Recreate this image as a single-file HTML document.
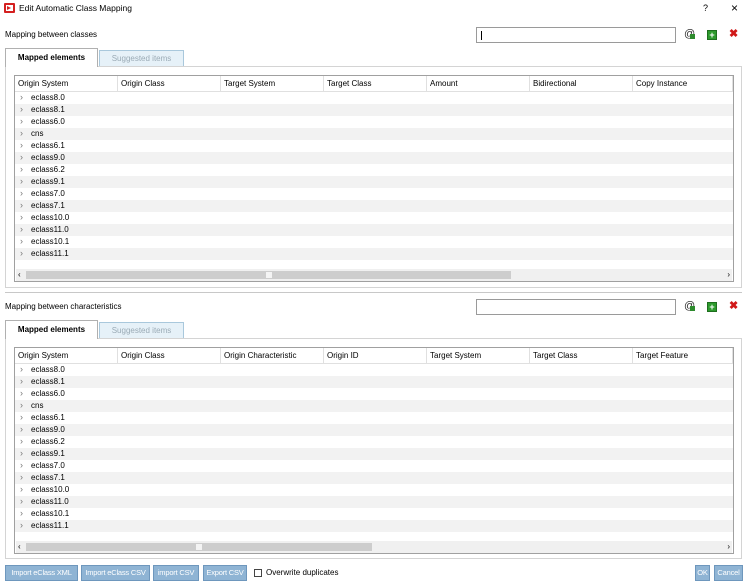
<!DOCTYPE html>
<html><head><style>
*{box-sizing:border-box;margin:0;padding:0}
body{width:750px;height:585px;background:#fff;font-family:"Liberation Sans",sans-serif;font-size:8px;color:#000;position:relative;overflow:hidden}
.a{position:absolute}
.inp{position:absolute;border:1px solid #9a9a9a;background:#fff;height:16px;width:200px}
.tab1{position:absolute;border:1px solid #b0b0b0;border-bottom:none;background:#fff;font-weight:bold;text-align:center;line-height:18px;height:19px;width:93px;font-size:8px}
.tab2{position:absolute;border:1px solid #a9c8dc;background:#e6f1f8;color:#9aaab5;text-align:center;line-height:15px;height:17px;width:85px;font-size:8px}
.panel{position:absolute;border:1px solid #d4d4d4;background:#fff;left:5px;width:737px}
.tbl{position:absolute;left:8px;width:720px;border:1px solid #a0a0a0;background:#fff}
.hdr{position:relative;height:16px;border-bottom:1px solid #e0e0e0}
.hdr span{position:absolute;top:0;height:15px;line-height:15px;padding-left:3px;border-right:1px solid #e0e0e0;width:103px}
.row{height:12px;line-height:12px;position:relative;padding-left:16px}
.row:nth-child(even){background:#f2f2f2}
.row:before{content:"\203A";position:absolute;left:5px;top:-1px;color:#777;font-size:9px}
.sb{position:absolute;left:1px;right:1px;height:12px;background:#f0f0f0}
.btn{position:absolute;top:565px;height:16px;background:#8fb4d4;border:1px solid #6e97bd;color:#fff;line-height:14px;font-size:7.5px;text-align:center;white-space:nowrap;overflow:hidden;letter-spacing:-0.2px}
.ico{position:absolute;font-size:11px}
</style></head><body>
<div class="a" style="left:4px;top:3px;width:11px;height:10px;background:#d42020;border-radius:1px"><div style="position:absolute;left:2px;top:2px;width:7px;height:6px;background:#fff"></div><div style="position:absolute;left:3px;top:3px;width:0;height:0;border-left:4px solid #d42020;border-top:2px solid transparent;border-bottom:2px solid transparent"></div></div>
<div class="a" style="left:19px;top:3px;font-size:8.5px">Edit Automatic Class Mapping</div>
<div class="a" style="left:703px;top:3px;font-size:9px">?</div>
<div class="a" style="left:731px;top:1px;font-size:12px">×</div>

<div class="a" style="left:5px;top:30px">Mapping between classes</div>
<div class="inp" style="left:476px;top:27px"><div style="position:absolute;left:4px;top:3px;width:1px;height:9px;background:#000"></div></div>
<div class="ico" style="left:684px;top:28px;color:#333">@<span style="position:absolute;left:6px;top:6px;width:5px;height:5px;background:#2d8a2d"></span></div>
<div class="a" style="left:707px;top:30px;width:10px;height:10px;background:#2d9a2d;border:1px solid #1e6e1e;color:#fff;font-size:9px;line-height:8px;text-align:center;font-weight:bold">+</div>
<div class="ico" style="left:729px;top:27px;color:#d01818;font-weight:bold">✖</div>

<div class="tab2" style="left:99px;top:50px">Suggested items</div>
<div class="panel" style="top:66px;height:222px">
 <div class="tbl" style="top:8px;height:207px">
  <div class="hdr"><span style="left:0">Origin System</span><span style="left:103px">Origin Class</span><span style="left:206px">Target System</span><span style="left:309px">Target Class</span><span style="left:412px">Amount</span><span style="left:515px">Bidirectional</span><span style="left:618px;width:100px">Copy Instance</span></div>
  <div><div class="row">eclass8.0</div><div class="row">eclass8.1</div><div class="row">eclass6.0</div><div class="row">cns</div><div class="row">eclass6.1</div><div class="row">eclass9.0</div><div class="row">eclass6.2</div><div class="row">eclass9.1</div><div class="row">eclass7.0</div><div class="row">eclass7.1</div><div class="row">eclass10.0</div><div class="row">eclass11.0</div><div class="row">eclass10.1</div><div class="row">eclass11.1</div></div>
  <div class="sb" style="top:193px"><div style="position:absolute;left:10px;width:485px;top:2px;height:8px;background:#cdcdcd"></div><div style="position:absolute;left:250px;top:3px;width:6px;height:6px;background:#f4f4f4"></div><span style="position:absolute;left:2px;top:0;line-height:12px">‹</span><span style="position:absolute;right:2px;top:0;line-height:12px">›</span></div>
 </div>
</div>
<div class="tab1" style="left:5px;top:48px">Mapped elements</div>
<div class="a" style="left:5px;top:292px;width:737px;height:1px;background:#c8c8c8"></div>

<div class="a" style="left:5px;top:302px">Mapping between characteristics</div>
<div class="inp" style="left:476px;top:299px"></div>
<div class="ico" style="left:684px;top:300px;color:#333">@<span style="position:absolute;left:6px;top:6px;width:5px;height:5px;background:#2d8a2d"></span></div>
<div class="a" style="left:707px;top:302px;width:10px;height:10px;background:#2d9a2d;border:1px solid #1e6e1e;color:#fff;font-size:9px;line-height:8px;text-align:center;font-weight:bold">+</div>
<div class="ico" style="left:729px;top:299px;color:#d01818;font-weight:bold">✖</div>

<div class="tab2" style="left:99px;top:322px">Suggested items</div>
<div class="panel" style="top:338px;height:221px">
 <div class="tbl" style="top:8px;height:207px">
  <div class="hdr"><span style="left:0">Origin System</span><span style="left:103px">Origin Class</span><span style="left:206px">Origin Characteristic</span><span style="left:309px">Origin ID</span><span style="left:412px">Target System</span><span style="left:515px">Target Class</span><span style="left:618px;width:100px">Target Feature</span></div>
  <div><div class="row">eclass8.0</div><div class="row">eclass8.1</div><div class="row">eclass6.0</div><div class="row">cns</div><div class="row">eclass6.1</div><div class="row">eclass9.0</div><div class="row">eclass6.2</div><div class="row">eclass9.1</div><div class="row">eclass7.0</div><div class="row">eclass7.1</div><div class="row">eclass10.0</div><div class="row">eclass11.0</div><div class="row">eclass10.1</div><div class="row">eclass11.1</div></div>
  <div class="sb" style="top:193px"><div style="position:absolute;left:10px;width:346px;top:2px;height:8px;background:#cdcdcd"></div><div style="position:absolute;left:180px;top:3px;width:6px;height:6px;background:#f4f4f4"></div><span style="position:absolute;left:2px;top:0;line-height:12px">‹</span><span style="position:absolute;right:2px;top:0;line-height:12px">›</span></div>
 </div>
</div>
<div class="tab1" style="left:5px;top:320px">Mapped elements</div>

<div class="btn" style="left:5px;width:73px">Import eClass XML</div>
<div class="btn" style="left:81px;width:69px">Import eClass CSV</div>
<div class="btn" style="left:153px;width:46px">import CSV</div>
<div class="btn" style="left:203px;width:44px">Export CSV</div>
<div class="a" style="left:254px;top:569px;width:8px;height:8px;border:1px solid #444;background:#fff"></div>
<div class="a" style="left:266px;top:568px">Overwrite duplicates</div>
<div class="btn" style="left:695px;width:15px">OK</div>
<div class="btn" style="left:714px;width:29px">Cancel</div>
</body></html>
